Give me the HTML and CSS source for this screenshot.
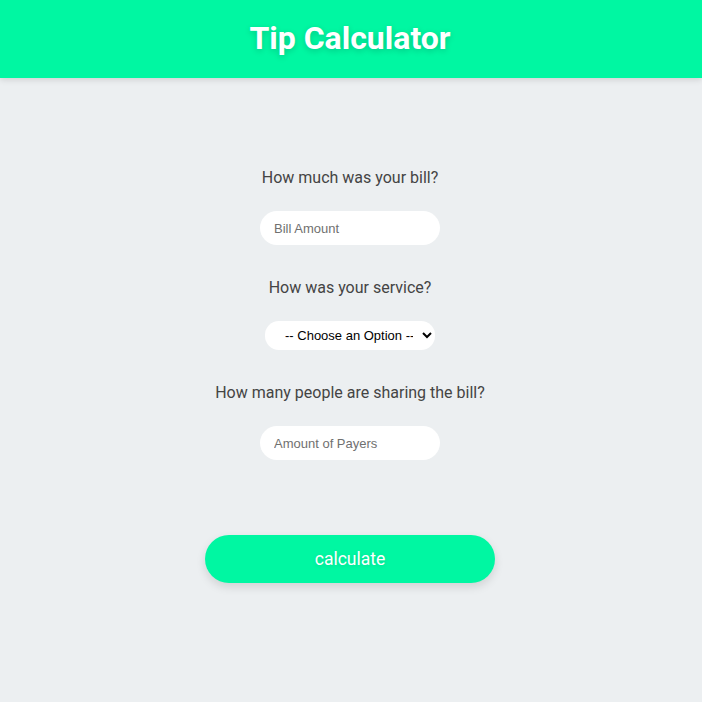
FILE: index.html
```html
<!DOCTYPE html>
<html>
<head>
<meta charset="utf-8">
<link rel="stylesheet" href="styles.css">
</head>
<body>
<header class="top">
  <h1 class="title">Tip Calculator</h1>
</header>
<main class="form">
  <p class="label label-first">How much was your bill?</p>
  <input class="field" type="text" placeholder="Bill Amount">
  <p class="label">How was your service?</p>
  <select class="choice">
    <option>-- Choose an Option --</option>
  </select>
  <p class="label">How many people are sharing the bill?</p>
  <input class="field" type="text" placeholder="Amount of Payers">
  <button class="calc">calculate</button>
</main>
</body>
</html>
```
FILE: styles.css
```css
html, body {
  margin: 0;
  padding: 0;
  background: #eceff1;
  font-family: Roboto, "Liberation Sans", sans-serif;
  height: 100%;
}
.top {
  height: 78px;
  background: #00f7a2;
  display: flex;
  align-items: center;
  justify-content: center;
  padding-right: 2px;
  box-shadow: 0 2px 6px rgba(0,0,0,0.12);
}
.title {
  margin: 0 0 2px;
  color: #fff;
  font-size: 32px;
  font-weight: 700;
  line-height: 38px;
  text-shadow: 0 2px 6px rgba(0,0,0,0.18);
}
.form {
  display: flex;
  flex-direction: column;
  align-items: center;
  padding-right: 2px;
}
.label {
  margin: 33px 0 0;
  font-size: 16px;
  line-height: 20px;
  color: #444;
}
.label-first {
  margin-top: 90px;
}
.field {
  margin-top: 23px;
  width: 180px;
  height: 34px;
  box-sizing: border-box;
  border: none;
  border-radius: 17px;
  background: #fff;
  padding: 0 14px;
  font-family: "Liberation Sans", Arial, sans-serif;
  font-size: 13px;
  color: #333;
  outline: none;
}
.field::placeholder {
  color: #707070;
}
.choice {
  margin-top: 23px;
  width: 170px;
  height: 29px;
  box-sizing: border-box;
  border: none;
  border-radius: 14px;
  background: #fff;
  padding: 0 6px 0 16px;
  font-family: "Liberation Sans", Arial, sans-serif;
  font-size: 13px;
  color: #000;
  outline: none;
}
.calc {
  margin-top: 75px;
  width: 290px;
  height: 48px;
  border: none;
  border-radius: 24px;
  background: #00f7a2;
  color: #fff;
  font-family: Roboto, "Liberation Sans", sans-serif;
  font-size: 17.5px;
  box-shadow: 0 4px 10px rgba(0,0,0,0.12);
  text-shadow: 0 1px 4px rgba(0,0,0,0.12);
  cursor: pointer;
}
```
